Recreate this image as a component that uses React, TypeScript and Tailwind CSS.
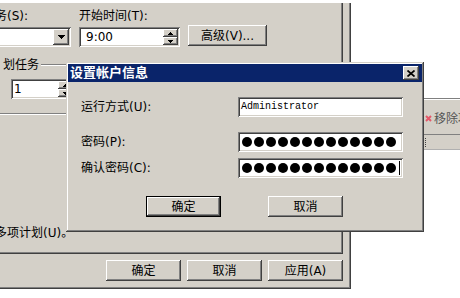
import React from 'react'

const raised = 'shadow-[inset_-1px_-1px_#404040,inset_1px_1px_#ffffff,inset_-2px_-2px_#808080,inset_2px_2px_#d4d0c8]'
const sunken = 'shadow-[inset_1px_1px_#808080,inset_-1px_-1px_#ffffff,inset_2px_2px_#404040,inset_-2px_-2px_#d4d0c8]'
const frame = 'shadow-[inset_-1px_-1px_#404040,inset_1px_1px_#d4d0c8,inset_-2px_-2px_#808080,inset_2px_2px_#ffffff]'

const Up = () => (
  <svg width="5" height="3" viewBox="0 0 5 3" shapeRendering="crispEdges">
    <path d="M2.5 0L5 3H0Z" fill="#000" />
  </svg>
)

const Down = ({ w = 5, h = 3 }: { w?: number; h?: number }) => (
  <svg width={w} height={h} viewBox={`0 0 ${w} ${h}`} shapeRendering="crispEdges">
    <path d={`M0 0H${w}L${w / 2} ${h}Z`} fill="#000" />
  </svg>
)

const Spin = () => (
  <div className="flex flex-col w-[15px] my-[2px] mr-[2px] self-stretch shrink-0">
    <div className={`flex-1 bg-[#d4d0c8] ${raised} flex items-center justify-center`}>
      <Up />
    </div>
    <div className={`flex-1 bg-[#d4d0c8] ${raised} flex items-center justify-center`}>
      <Down />
    </div>
  </div>
)

const Btn = ({ children, def = false }: { children: React.ReactNode; def?: boolean }) => (
  <div
    className={`w-[75px] h-[21px] bg-[#d4d0c8] ${raised} flex items-center justify-center whitespace-nowrap ${
      def ? 'border border-black' : ''
    }`}
  >
    {children}
  </div>
)

const Dots = ({ cursor = false }: { cursor?: boolean }) => (
  <div className="flex items-center gap-[2px] pl-[4px]">
    {Array.from({ length: 13 }).map((_, i) => (
      <span key={i} className="w-[10px] h-[10px] rounded-full bg-black" />
    ))}
    {cursor && <span className="w-[1px] h-[14px] bg-black ml-[1px]" />}
  </div>
)

export default function App() {
  return (
    <div className="relative w-[460px] h-[298px] overflow-hidden bg-white font-['DejaVu_Sans','Noto_Sans_CJK_SC',sans-serif] text-[12px] leading-[14px] text-black">
      {/* window behind */}
      <div className="absolute left-0 top-[3px] w-[351px] h-[286px] bg-[#d4d0c8] overflow-hidden shadow-[inset_-1px_-1px_#404040,inset_-2px_-2px_#808080]">
        <div className="w-[343px] h-[251px] pt-[6px] overflow-hidden shadow-[inset_-1px_-1px_#404040,inset_-2px_-2px_#808080]">
          <div className="flex">
            <div className="flex flex-col w-[71px] shrink-0">
              <span className="-ml-[5px] whitespace-nowrap">务(S):</span>
              <div className={`mt-[4px] -ml-[10px] w-[81px] h-[20px] bg-white ${sunken} flex justify-end items-center pr-[2px]`}>
                <div className={`w-[16px] h-[16px] bg-[#d4d0c8] ${raised} flex items-center justify-center`}>
                  <Down w={7} h={4} />
                </div>
              </div>
            </div>
            <div className="flex flex-col ml-[8px] shrink-0">
              <span className="whitespace-nowrap">开始时间(T):</span>
              <div className={`mt-[4px] w-[101px] h-[20px] bg-white ${sunken} flex items-center`}>
                <span className="flex-1 pl-[7px]">9:00</span>
                <Spin />
              </div>
            </div>
            <div className={`ml-[8px] mt-[16px] w-[79px] h-[21px] shrink-0 bg-[#d4d0c8] ${raised} flex items-center justify-center whitespace-nowrap`}>
              高级(V)...
            </div>
          </div>

          <div className="mt-[11px] flex items-center">
            <span className="ml-[3px] shrink-0 whitespace-nowrap">划任务</span>
            <div className="flex-1 ml-[2px] h-[2px] border-t border-[#808080] bg-white" />
          </div>
          <div className={`mt-[7px] ml-[11px] w-[64px] h-[20px] bg-white ${sunken} flex items-center`}>
            <span className="flex-1 pl-[3px]">1</span>
            <Spin />
          </div>
          <div className="mt-[14px] h-[2px] border-t border-[#808080] bg-white" />

          <div className="mt-[111px] -ml-[5px] whitespace-nowrap">多项计划(U)。</div>
        </div>
        <div className="flex justify-end gap-[6px] pr-[8px] mt-[6px]">
          <Btn>确定</Btn>
          <Btn>取消</Btn>
          <Btn>应用(A)</Btn>
        </div>
      </div>

      {/* window at the right */}
      <div className="absolute left-[424px] top-[98px] w-[36px] h-[200px] bg-white">
        <div className="h-[2px] border-t border-[#808080] bg-white" />
        <div className="h-[34px] bg-[#d4d0c8] flex items-center pt-[3px] overflow-hidden">
          <svg width="7" height="7" viewBox="0 0 7 7" className="ml-[1px] shrink-0">
            <path d="M1 1L6 6M6 1L1 6" stroke="#e5586a" strokeWidth="2" />
          </svg>
          <span className="ml-[2px] whitespace-nowrap text-[#555]">移除项</span>
        </div>
        <div className="h-[1px] bg-[#808080]" />
        <div className="h-[14px] bg-[#d4d0c8] flex items-center">
          <div className="ml-[1px] w-[1px] h-[9px] border-l border-dotted border-[#404040]" />
        </div>
        <div className="h-[1px] bg-[#b0b0b0]" />
      </div>

      {/* dialog */}
      <div className={`absolute left-[66px] top-[62px] w-[358px] h-[170px] bg-[#d4d0c8] ${frame} p-[2px] flex flex-col`}>
        <div className="h-[18px] bg-[#0a246a] flex items-center pl-[2px] pr-[3px]">
          <span className="text-white font-bold text-[13px] leading-[16px]">设置帐户信息</span>
          <div className={`ml-auto w-[16px] h-[14px] bg-[#d4d0c8] ${raised} flex items-center justify-center`}>
            <svg width="8" height="7" viewBox="0 0 8 7">
              <path d="M0.5 0.5L7.5 6.5M7.5 0.5L0.5 6.5" stroke="#000" strokeWidth="1.7" />
            </svg>
          </div>
        </div>

        <div className="mt-[15px] flex items-center h-[20px]">
          <span className="ml-[13px] w-[157px] shrink-0 whitespace-nowrap">运行方式(U):</span>
          <div className={`w-[165px] h-[20px] shrink-0 bg-white ${sunken} flex items-center pl-[3px] font-['Liberation_Mono',monospace] text-[10px]`}>
            Administrator
          </div>
        </div>
        <div className="mt-[15px] flex items-center h-[20px]">
          <span className="ml-[13px] w-[157px] shrink-0 whitespace-nowrap">密码(P):</span>
          <div className={`w-[165px] h-[20px] shrink-0 bg-white ${sunken} flex items-center`}>
            <Dots />
          </div>
        </div>
        <div className="mt-[6px] flex items-center h-[20px]">
          <span className="ml-[13px] w-[157px] shrink-0 whitespace-nowrap">确认密码(C):</span>
          <div className={`w-[165px] h-[20px] shrink-0 bg-white ${sunken} flex items-center`}>
            <Dots cursor />
          </div>
        </div>

        <div className="mt-[18px] flex">
          <div className="ml-[78px]">
            <Btn def>确定</Btn>
          </div>
          <div className="ml-[47px]">
            <Btn>取消</Btn>
          </div>
        </div>
      </div>
    </div>
  )
}
